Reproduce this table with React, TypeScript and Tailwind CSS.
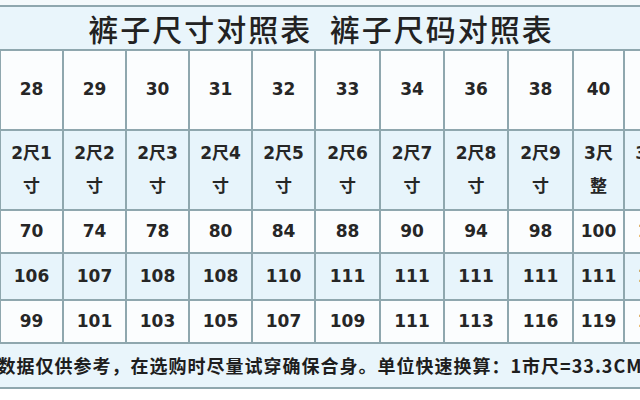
import React from 'react';

const sizes = ['28', '29', '30', '31', '32', '33', '34', '36', '38', '40', '42'];
const chi = [
  ['2尺1', '寸'],
  ['2尺2', '寸'],
  ['2尺3', '寸'],
  ['2尺4', '寸'],
  ['2尺5', '寸'],
  ['2尺6', '寸'],
  ['2尺7', '寸'],
  ['2尺8', '寸'],
  ['2尺9', '寸'],
  ['3尺', '整'],
  ['3尺1', '寸'],
];
const waist = ['70', '74', '78', '80', '84', '88', '90', '94', '98', '100', '104'];
const length = ['106', '107', '108', '108', '110', '111', '111', '111', '111', '111', '112'];
const hip = ['99', '101', '103', '105', '107', '109', '111', '113', '116', '119', '122'];

const font = { fontFamily: '"DejaVu Sans", "Noto Sans CJK SC", sans-serif' };

const Cell = ({ children, blue }: { children: React.ReactNode; blue?: boolean }) => (
  <div
    className={`flex flex-col items-center justify-center text-[17px] font-bold text-[#262626] whitespace-nowrap overflow-hidden ${
      blue ? 'bg-[#e7f4fb]' : 'bg-[#fbfdfe]'
    }`}
  >
    {children}
  </div>
);

const App = () => {
  return (
    <div className="w-[640px] h-[400px] bg-white overflow-hidden" style={font}>
      {/* top gap */}
      <div className="h-[5px] bg-[#f4f9fb]"></div>

      {/* Title */}
      <div className="h-[46px] border-y-2 border-[#8fa7ae] bg-[#e9f5fb] flex items-center justify-center">
        <span
          className="text-[30px] font-medium text-[#222] tracking-[2px] pl-[2px]"
          style={{ fontFamily: '"Noto Sans CJK SC", sans-serif' }}
        >
          裤子尺寸对照表&nbsp;&nbsp;裤子尺码对照表
        </span>
      </div>

      {/* Table */}
      <div className="grid grid-cols-[61px_61px_61px_61px_61px_63px_62px_62px_63px_49px_61px] grid-rows-[78px_78px_41px_45px_41px] gap-[2px] bg-[#8fa7ae] pl-[1px] w-[700px]">
        {sizes.map((s, i) => (
          <Cell key={'s' + i}>{s}</Cell>
        ))}
        {chi.map((c, i) => (
          <Cell key={'c' + i} blue>
            <span className="leading-[33px]">{c[0]}</span>
            <span className="leading-[33px]">{c[1]}</span>
          </Cell>
        ))}
        {waist.map((s, i) => (
          <Cell key={'w' + i}>{s}</Cell>
        ))}
        {length.map((s, i) => (
          <Cell key={'l' + i} blue>
            {s}
          </Cell>
        ))}
        {hip.map((s, i) => (
          <Cell key={'h' + i}>{s}</Cell>
        ))}
      </div>

      {/* Footer note */}
      <div className="h-[47px] border-y-2 border-[#8fa7ae] bg-[#e9f5fb] flex items-center justify-center">
        <span
          className="whitespace-nowrap text-[18px] font-bold text-[#1e1e1e] tracking-[1px]"
          style={{ fontFamily: '"Noto Sans CJK SC", sans-serif' }}
        >
          数据仅供参考，在选购时尽量试穿确保合身。单位快速换算：1市尺=33.3CM
        </span>
      </div>
    </div>
  );
};

export default App;
